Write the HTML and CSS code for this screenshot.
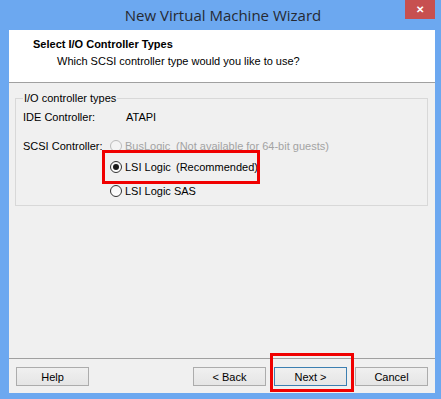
FILE: index.html
```html
<!DOCTYPE html>
<html lang="en">
<head>
    <meta charset="UTF-8">
    <title>New Virtual Machine Wizard</title>
    <link rel="stylesheet" href="styles.css">
</head>
<body>
    <div class="window">
        <div class="titlebar">
            <span class="title">New Virtual Machine Wizard</span>
            <span class="close">&#x2715;</span>
        </div>

        <div class="client">
            <div class="header">
                <h1>Select I/O Controller Types</h1>
                <p>Which SCSI controller type would you like to use?</p>
            </div>

            <div class="content">
                <fieldset class="group">
                    <legend>I/O controller types</legend>
                    <div class="row">
                        <span class="label">IDE Controller:</span>
                        <span>ATAPI</span>
                    </div>
                    <div class="row scsi">
                        <span class="label">SCSI Controller:</span>
                        <div class="options">
                            <div class="option disabled">
                                <span class="radio"></span>
                                <span class="name"><u>B</u>usLogic</span>
                                <span>(Not available for 64-bit guests)</span>
                            </div>
                            <div class="option marked">
                                <span class="radio checked"></span>
                                <span class="name">LSI Logic</span>
                                <span>(Recommended)</span>
                            </div>
                            <div class="option last">
                                <span class="radio"></span>
                                <span>LSI Logic SAS</span>
                            </div>
                        </div>
                    </div>
                </fieldset>
            </div>

            <div class="footer">
                <button class="btn">Help</button>
                <div class="nav">
                    <button class="btn">&lt; Back</button>
                    <button class="btn default marked-btn">Next &gt;</button>
                    <button class="btn">Cancel</button>
                </div>
            </div>
        </div>
    </div>
</body>
</html>
```

FILE: styles.css
```css
body {
    margin: 0;
    font-family: "Liberation Sans", Arial, sans-serif;
    font-size: 11px;
    color: #000;
}

.window {
    width: 441px;
    height: 399px;
    background-color: #6ca8f0;
    box-sizing: border-box;
    padding: 0 6px 6px 9px;
    display: flex;
    flex-direction: column;
}

.titlebar {
    height: 30px;
    position: relative;
    display: flex;
    justify-content: center;
    align-items: center;
}

.title {
    font-family: "Open Sans", sans-serif;
    font-size: 15px;
    color: #262a33;
    margin-left: 2px;
}

.close {
    position: absolute;
    top: 0;
    right: 0;
    width: 30px;
    height: 19px;
    background-color: #c75050;
    color: #fff;
    font-size: 10px;
    font-weight: bold;
    display: flex;
    justify-content: center;
    align-items: center;
}

.client {
    flex: 1;
    background-color: #f0f0f0;
    display: flex;
    flex-direction: column;
}

.header {
    height: 52px;
    background-color: #fff;
    border-bottom: 1px solid #a0a0a0;
    padding-left: 24px;
}

.header h1 {
    font-size: 11px;
    font-weight: bold;
    margin: 7px 0 0 0;
    line-height: 14px;
}

.header p {
    margin: 3px 0 0 24px;
    line-height: 14px;
}

.content {
    flex: 1;
    padding: 8px 7px 0 6px;
    border-bottom: 1px solid #a0a0a0;
}

.group {
    margin: 0;
    height: 115px;
    box-sizing: border-box;
    border: 1px solid #d8d8d8;
    padding: 3px 0 0 7px;
}

.group legend {
    padding: 0 1px;
    line-height: 14px;
}

.row {
    display: flex;
    line-height: 14px;
    margin-top: 2px;
}

.label {
    width: 103px;
}

.scsi {
    margin-top: 15px;
}

.scsi .label {
    width: 87px;
}

.options {
    display: flex;
    flex-direction: column;
    gap: 7px;
}

.option {
    display: flex;
    align-items: center;
    height: 14px;
    position: relative;
}

.option.last {
    margin-top: 3px;
}

.option .name {
    width: 51px;
    flex-shrink: 0;
}

.option.disabled {
    color: #a3a3a3;
}

.radio {
    width: 12px;
    height: 12px;
    flex-shrink: 0;
    box-sizing: border-box;
    border: 1px solid #333;
    border-radius: 50%;
    background: linear-gradient(#f4f4f4, #fff);
    margin-right: 3px;
    display: flex;
    justify-content: center;
    align-items: center;
}

.disabled .radio {
    border-color: #bcbcbc;
    background: #f4f4f4;
}

.radio.checked::after {
    content: "";
    width: 6px;
    height: 6px;
    border-radius: 50%;
    background-color: #1a1a1a;
}

/* cuadros rojos de anotacion */
.marked::before {
    content: "";
    position: absolute;
    left: -8px;
    top: -10px;
    width: 158px;
    height: 34px;
    box-sizing: border-box;
    border: 3px solid #f00000;
}

.footer {
    height: 34px;
    display: flex;
    justify-content: space-between;
    align-items: flex-start;
    padding: 8px 7px 0 7px;
    box-sizing: border-box;
}

.nav {
    display: flex;
    gap: 8px;
}

.btn {
    width: 73px;
    height: 19px;
    padding: 0;
    font-family: "Liberation Sans", Arial, sans-serif;
    font-size: 11px;
    color: #000;
    border: 1px solid #acacac;
    background: linear-gradient(#f0f0f0, #e5e5e5);
    position: relative;
}

.btn.default {
    border-color: #3c7fb1;
}

.marked-btn::after {
    content: "";
    position: absolute;
    left: -5px;
    top: -15px;
    width: 84px;
    height: 39px;
    box-sizing: border-box;
    border: 3px solid #f00000;
}
```
